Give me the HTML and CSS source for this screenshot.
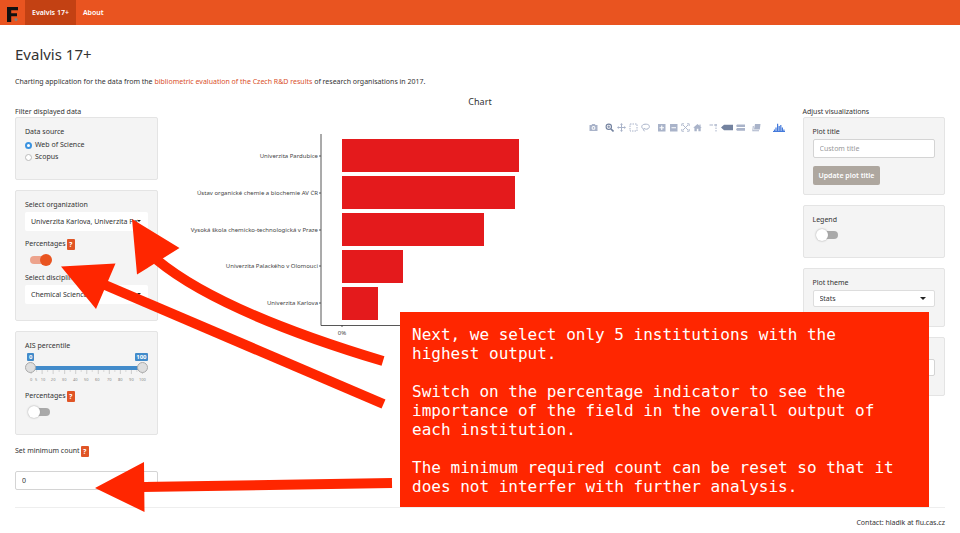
FILE: index.html
```html
<!DOCTYPE html>
<html lang="en">
<head>
<meta charset="utf-8">
<meta name="viewport" content="width=device-width, initial-scale=1">
<title>Evalvis 17+</title>
<link rel="stylesheet" href="styles.css">
</head>
<body>
<nav class="navbar">
  <a class="brand" href="#" aria-label="Home">
    <svg width="12" height="16" viewBox="0 0 12 16"><path d="M0 0H11V3.2H4.2V6.2H10V9.2H4.2V15H0Z" fill="#111"/><circle cx="9" cy="12.6" r="1.6" fill="#8a7f78"/></svg>
  </a>
  <a class="nav-link active" href="#">Evalvis 17+</a>
  <a class="nav-link" href="#">About</a>
</nav>
<main class="page">
  <h1>Evalvis 17+</h1>
  <p class="intro">Charting application for the data from the <a href="#">bibliometric evaluation of the Czech R&amp;D results</a> of research organisations in 2017.</p>
  <div class="layout">
    <aside class="side">
      <h2 class="side-title">Filter displayed data</h2>
      <section class="well">
        <fieldset class="group">
          <legend class="label">Data source</legend>
          <label class="option"><input type="radio" name="source" checked>Web of Science</label>
          <label class="option"><input type="radio" name="source">Scopus</label>
        </fieldset>
      </section>
      <section class="well">
        <div class="group">
          <label class="label" for="org">Select organization</label>
          <div class="picker"><select id="org"><option>Univerzita Karlova, Univerzita Palackého v Olomouci</option></select></div>
        </div>
        <div class="group">
          <div class="label-row"><label for="pct">Percentages</label><button class="help" type="button">?</button></div>
          <input class="switch" id="pct" type="checkbox" checked>
        </div>
        <div class="group">
          <label class="label" for="disc">Select discipline</label>
          <div class="picker"><select id="disc"><option>Chemical Sciences</option></select></div>
        </div>
      </section>
      <section class="well">
        <label class="label" for="ais-low">AIS percentile</label>
        <div class="range">
          <div class="range-values"><output>0</output><output>100</output></div>
          <div class="range-track">
            <input id="ais-low" type="range" min="0" max="100" value="0">
            <input type="range" min="0" max="100" value="100" aria-label="100">
          </div>
          <svg class="range-scale" viewBox="0 0 122 14">
            <path d="M6 0v5M17 0v5M28 0v5M39.500 0v5M50.500 0v5M61.500 0v5M73 0v5M84 0v5M95 0v5M106 0v5M117 0v5" stroke="#bbb" stroke-width=".7"/>
            <path d="M11.500 0v3M22.500 0v3M34 0v3M45 0v3M56 0v3M67 0v3M78.500 0v3M89.500 0v3M100.500 0v3M111.500 0v3" stroke="#ccc" stroke-width=".7"/>
            <g><text x="6" y="12">0</text><text x="11" y="12">5</text><text x="18" y="12">10</text><text x="28" y="12">20</text><text x="39" y="12">30</text><text x="50" y="12">40</text><text x="61" y="12">50</text><text x="72" y="12">60</text><text x="84" y="12">70</text><text x="95" y="12">80</text><text x="106" y="12">90</text><text x="117" y="12">100</text></g>
          </svg>
        </div>
        <div class="group">
          <div class="label-row"><label for="aispct">Percentages</label><button class="help" type="button">?</button></div>
          <input class="switch" id="aispct" type="checkbox">
        </div>
      </section>
      <div class="minimum">
        <div class="label-row"><label for="min">Set minimum count</label><button class="help" type="button">?</button></div>
        <input class="field" id="min" type="text" value="0">
      </div>
    </aside>

    <section class="chart">
      <h2 class="chart-title">Chart</h2>
      <div class="plot">
        <svg class="bars" viewBox="0 0 615 232">
          <g fill="#e41a1c">
            <rect x="169" y="32" width="177" height="33"/>
            <rect x="169" y="69" width="173" height="33"/>
            <rect x="169" y="106" width="142" height="33"/>
            <rect x="169" y="143" width="61" height="33"/>
            <rect x="169" y="180" width="36" height="33"/>
          </g>
          <path d="M148 27V218.500H615M146 49h2M146 86h2M146 123h2M146 159h2M146 196h2M169 218v2" fill="none" stroke="#444" stroke-width=".9"/>
          <g class="names">
            <text x="145" y="51">Univerzita Pardubice</text>
            <text x="145" y="88">Ústav organické chemie a biochemie AV ČR</text>
            <text x="145" y="125">Vysoká škola chemicko-technologická v Praze</text>
            <text x="145" y="161">Univerzita Palackého v Olomouci</text>
            <text x="145" y="198">Univerzita Karlova</text>
          </g>
          <text class="tick" x="169" y="228">0%</text>
        </svg>
        <div class="modebar">
          <span><button type="button"><svg viewBox="0 0 9 9"><path fill-rule="evenodd" d="M.5 2H2.500L3.200 1H5.800L6.500 2H8.500V8H.5ZM4.500 3A1.900 1.900 0 1 0 4.500 6.800A1.900 1.900 0 1 0 4.500 3ZM4.500 4A.9.9 0 1 1 4.500 5.800A.9.9 0 1 1 4.500 4Z"/></svg></button></span>
          <span>
            <button type="button" class="on"><svg viewBox="0 0 9 9"><g fill="none" stroke="currentColor"><circle cx="3.800" cy="3.800" r="2.700" stroke-width="1.100"/><path d="M6 6L8.500 8.500" stroke-width="1.600"/><path d="M2.300 3.800H5.300M3.800 2.300V5.300" stroke-width=".8"/></g></svg></button>
            <button type="button"><svg viewBox="0 0 9 9"><path d="M4.500 0L6 1.800H5V4H7.200V3L9 4.500L7.200 6V5H5V7.200H6L4.500 9L3 7.200H4V5H1.800V6L0 4.500L1.800 3V4H4V1.800H3Z"/></svg></button>
            <button type="button"><svg viewBox="0 0 9 9"><rect x="1" y="1" width="7" height="7" fill="none" stroke="currentColor" stroke-dasharray="1.500 1"/></svg></button>
            <button type="button"><svg viewBox="0 0 9 9"><path d="M2.500 6C0 5 0 1.500 4 1.200S9 3 8 4.800S4.500 6.500 3 5.500Q1.500 6.500 3.500 8.300" fill="none" stroke="currentColor"/></svg></button>
          </span>
          <span>
            <button type="button"><svg viewBox="0 0 9 9"><path fill-rule="evenodd" d="M1 1H8.500V8.500H1ZM4.200 2.500V4.200H2.500V5.300H4.200V7H5.300V5.300H7V4.200H5.300V2.500Z"/></svg></button>
            <button type="button"><svg viewBox="0 0 9 9"><path fill-rule="evenodd" d="M1 1H8.500V8.500H1ZM2.500 4.200V5.300H7V4.200Z"/></svg></button>
            <button type="button"><svg viewBox="0 0 9 9"><path d="M.8 3V.8H3M6 .8H8.200V3M8.200 6V8.200H6M3 8.200H.8V6M2 2L7 7M7 2L2 7" fill="none" stroke="currentColor" stroke-width=".9"/></svg></button>
            <button type="button"><svg viewBox="0 0 9 9"><path d="M4.500 1L6.500 2.700V1.500H7.600V3.700L8.800 4.800H7.700V8.200H5.400V5.800H3.800V8.200H1.400V4.800H.2Z"/></svg></button>
          </span>
          <span>
            <button type="button"><svg viewBox="0 0 9 9"><path d="M.5 2H4M5 2H8M7 1V3.500M7 4.500V6M7 7V8.500" fill="none" stroke="currentColor" stroke-width="1"/></svg></button>
            <button type="button" class="on wide"><svg viewBox="0 0 12 9"><path d="M0 4.500L3 1.700H12V7.300H3Z"/></svg></button>
            <button type="button"><svg viewBox="0 0 9 9"><path d="M0 3L1 1.500H9V4H1ZM0 6.500L1 5H9V7.800H1Z"/></svg></button>
          </span>
          <span><button type="button"><svg viewBox="0 0 9 9"><path d="M3 1H8.500L7.800 6.500H2ZM.8 3H1.800L1.300 7.300H7V8.200H.3Z"/></svg></button></span>
          <span><button type="button" class="logo wide"><svg viewBox="0 0 12 9"><path d="M0 8.500H12M1.500 8V6.500M3 8V4.500M4.600 8V.8M6.200 8V3M7.800 8V2M9.400 8V4.500M10.900 8V6.500" fill="none" stroke="currentColor" stroke-width="1.200"/></svg></button></span>
        </div>
      </div>
    </section>

    <aside class="side">
      <h2 class="side-title">Adjust visualizations</h2>
      <section class="well">
        <label class="label" for="ptitle">Plot title</label>
        <input class="field" id="ptitle" type="text" placeholder="Custom title">
        <button class="update" type="button">Update plot title</button>
      </section>
      <section class="well">
        <div class="group">
          <label class="label" for="legend">Legend</label>
          <input class="switch" id="legend" type="checkbox">
        </div>
      </section>
      <section class="well">
        <div class="group">
          <label class="label" for="theme">Plot theme</label>
          <div class="picker outlined"><select id="theme"><option>Stats</option></select></div>
        </div>
      </section>
      <section class="well well-last">
        <input class="field" type="text" aria-label="Plot option">
      </section>
    </aside>
  </div>
  <footer>Contact: hladik at flu.cas.cz</footer>
</main>

<svg class="arrows" width="400" height="533" viewBox="0 0 400 533" aria-hidden="true">
  <g fill="none" stroke="#ff2600" stroke-width="10">
    <path d="M157 260Q220 312 383 361"/>
    <path d="M105 285L383.500 404"/>
    <path d="M142 487L392 483"/>
  </g>
  <path d="M132 219L179.500 248L137 274.500ZM61 266.500L115.500 263.500L96 309ZM95 488L144 462L144.500 512Z" fill="#ff2600"/>
</svg>
<aside class="note">
  <p>Next, we select only 5 institutions with the<br>highest output.</p>
  <p>Switch on the percentage indicator to see the<br>importance of the field in the overall output of<br>each institution.</p>
  <p>The minimum required count can be reset so that it<br>does not interfer with further analysis.</p>
</aside>
</body>
</html>
```
FILE: styles.css
```css
* { box-sizing: border-box; }
body {
  position: relative;
  margin: 0;
  background: #fff;
  color: #333;
  font: 7px/10px "Noto Sans", sans-serif;
}
h1, h2, p { margin: 0; font-weight: 400; }
input, select, button { font: inherit; color: inherit; margin: 0; }
button { border: 0; padding: 0; }
a { color: #d9502a; text-decoration: none; }

.navbar { display: flex; height: 25px; background: #e95420; }
.brand { width: 25px; padding: 7px 0 0 7px; }
.brand svg { display: block; }
.nav-link { padding: 0 7px; color: #fff; font-weight: 600; line-height: 25px; }
.nav-link.active { background: #c34113; }

.page { padding: 19px 15px 0; }
h1 { font-size: 15px; line-height: 20px; margin-bottom: 13px; }
.intro { margin-bottom: 10px; }
.layout {
  display: grid;
  grid-template-columns: repeat(12, minmax(0, 1fr));
  column-gap: 15px;
  padding-bottom: 17px;
  border-bottom: 1px solid #eee;
}
.side { grid-column: span 2; padding-top: 10px; }
.chart { grid-column: span 8; }
.side-title { font-size: 7px; line-height: 10px; }
.chart-title { font-size: 9px; line-height: 10px; text-align: center; }

.well {
  margin-bottom: 10px;
  padding: 9px;
  background: #f4f4f4;
  border: 1px solid #e4e4e4;
  border-radius: 2px;
}
.well-last { padding: 21px 9px 19px; }
.group { margin: 0 0 7px; padding: 0; border: 0; }
.label { display: block; margin-bottom: 2px; padding: 0; }
.label-row { display: flex; align-items: center; gap: 1px; height: 12px; }
.option { display: flex; align-items: center; gap: 3px; height: 12px; }
.option input {
  appearance: none;
  width: 7px;
  height: 7px;
  background: #fff;
  border: 1px solid #bbb;
  border-radius: 50%;
}
.option input:checked { border: 2px solid #3b93e0; }
.help {
  width: 8px;
  height: 11px;
  border-radius: 1px;
  background: #e05526;
  color: #fff;
  font-weight: 700;
  line-height: 11px;
}

.picker { position: relative; }
.picker select {
  display: block;
  appearance: none;
  width: 100%;
  height: 19px;
  padding: 0 10px 0 6px;
  border: 0;
  border-radius: 2px;
  background: #fff;
}
.picker::after {
  content: "";
  position: absolute;
  top: 8px;
  right: 7px;
  border: 2px solid transparent;
  border-top-color: #222;
  border-bottom-width: 0;
}
.picker.outlined::after { top: 7px; right: 9px; border-width: 3px 3px 0; }
.picker.outlined select { height: 17px; border: 1px solid #ddd; margin-bottom: 10px; }

.switch {
  display: block;
  position: relative;
  appearance: none;
  width: 22px;
  height: 12px;
  margin: 4px 0 0 4px;
}
.switch::before {
  content: "";
  position: absolute;
  inset: 2px 1px;
  border-radius: 4px;
  background: #a9a9a9;
}
.switch::after {
  content: "";
  position: absolute;
  top: 0;
  left: -1px;
  width: 12px;
  height: 12px;
  border-radius: 50%;
  background: #fff;
  box-shadow: 0 0 2px #999;
}
.switch:checked::before { background: #eda38c; }
.switch:checked::after { left: 11px; background: #e95420; box-shadow: none; }

.range { height: 37px; }
.range-values { display: flex; justify-content: space-between; height: 9px; padding-left: 2px; }
.range-values output {
  height: 8px;
  padding: 0 1px;
  border-radius: 1px;
  background: #428bca;
  color: #fff;
  font-size: 6px;
  font-weight: 700;
  line-height: 8px;
}
.range-values output:first-child { padding: 0 2px; }
.range-track {
  position: relative;
  height: 11px;
  background: linear-gradient(#428bca, #428bca) center / calc(100% - 10px) 4px no-repeat;
}
.range-track input {
  position: absolute;
  inset: 0;
  width: 100%;
  height: 11px;
  appearance: none;
  background: none;
  pointer-events: none;
}
.range-track input::-webkit-slider-thumb {
  appearance: none;
  width: 11px;
  height: 11px;
  border: 1px solid #aaa;
  border-radius: 50%;
  background: #dedede;
  pointer-events: auto;
}
.range-scale { display: block; width: 100%; margin-top: -4px; }
.range-scale text { fill: #888; font-size: 4px; text-anchor: middle; }

.field {
  display: block;
  width: 100%;
  height: 19px;
  padding: 0 6px;
  border: 1px solid #d4d4d4;
  border-radius: 2px;
  background: #fff;
}
.well-last .field { height: 17px; }
.field::placeholder { color: #999; }
.minimum .field { margin-top: 14px; }
.update {
  margin-top: 8px;
  height: 19px;
  padding: 0 6px;
  border-radius: 2px;
  background: #aea79f;
  color: #fff;
  font-weight: 600;
}

.plot { position: relative; }
.bars { display: block; width: 100%; }
.names text { fill: #444; font-size: 6px; text-anchor: end; }
.tick { fill: #444; font-size: 6px; text-anchor: middle; }
.modebar {
  position: absolute;
  top: 16px;
  right: 3px;
  display: flex;
  gap: 7px;
}
.modebar span { display: flex; gap: 3px; }
.modebar span:last-child { margin-left: 5px; }
.modebar button { width: 9px; height: 9px; background: none; color: #a9b3c9; }
.modebar .wide { width: 12px; }
.modebar .on { color: #73829f; }
.modebar .logo { color: #447adb; }
.modebar svg { display: block; width: 100%; height: 9px; fill: currentColor; }

footer { padding: 10px 0 5px; text-align: right; }

.arrows { position: absolute; top: 0; left: 0; pointer-events: none; }
.note {
  position: absolute;
  top: 312px;
  left: 400px;
  padding: 13px 12px 11px;
  width: 529px;
  background: #ff2600;
  color: #fff;
  font: 16px/19px "DejaVu Sans Mono", monospace;
}
.note p + p { margin-top: 19px; }
```
